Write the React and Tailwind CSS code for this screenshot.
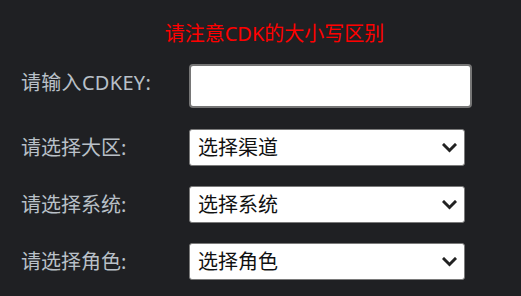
import React from "react";

const font = { fontFamily: '"Noto Sans", "Noto Sans CJK SC", sans-serif' };

function Chevron() {
  return (
    <svg width="15" height="10" viewBox="0 0 15 10" className="shrink-0">
      <polyline points="2,2 7.5,7.5 13,2" fill="none" stroke="#222" strokeWidth="3" strokeLinecap="square" />
    </svg>
  );
}

function SelectRow({ label, value }) {
  return (
    <div className="flex items-center">
      <div className="w-[168px] text-[20px] leading-[28px] text-[#b9c0c8]">{label}</div>
      <div className="flex h-[37px] w-[276px] items-center justify-between rounded-[3px] border border-[#7a7a7a] bg-white pl-[8px] pr-[7px]">
        <span className="text-[20px] leading-[28px] text-[#111]">{value}</span>
        <Chevron />
      </div>
    </div>
  );
}

export default function App() {
  return (
    <div className="min-h-screen bg-[#1f2023] pt-[20px] pl-[21px]" style={font}>
      <p className="h-[28px] pl-[7px] text-center text-[20px] leading-[28px] text-[#ff0000]">
        请注意CDK的大小写区别
      </p>
      <div className="mt-[16px] flex flex-col gap-[20px]">
        <div className="flex items-center">
          <div className="w-[168px] -translate-y-[3px] text-[20px] leading-[28px] tracking-[0.3px] text-[#b9c0c8]">请输入CDKEY:</div>
          <input className="h-[44px] w-[283px] rounded-[4px] border-2 border-[#767676] bg-white outline-none" />
        </div>
        <div className="flex flex-col gap-[20px] pt-[1px]">
          <SelectRow label="请选择大区:" value="选择渠道" />
          <SelectRow label="请选择系统:" value="选择系统" />
          <SelectRow label="请选择角色:" value="选择角色" />
        </div>
      </div>
    </div>
  );
}
